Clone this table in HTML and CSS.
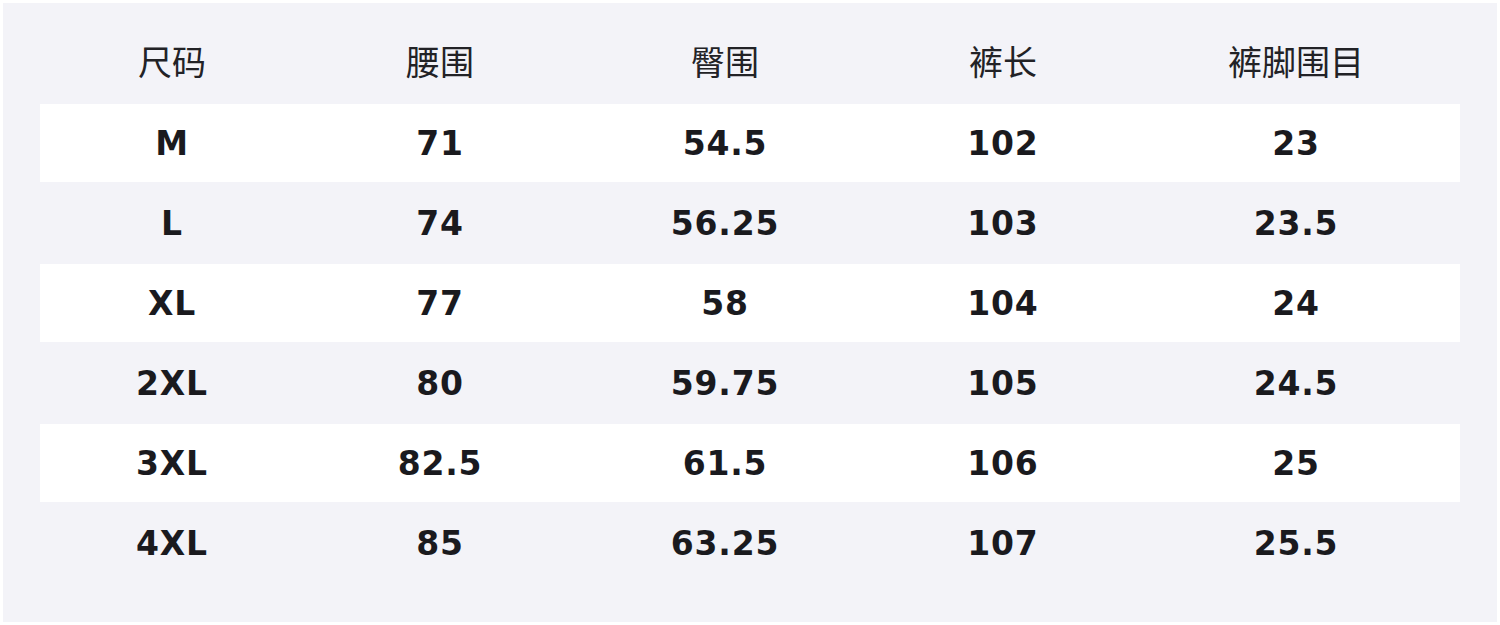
FILE: index.html
```html
<!DOCTYPE html>
<html lang="zh">
<head>
<meta charset="utf-8">
<link rel="stylesheet" href="styles.css">
</head>
<body>
<div class="panel">
  <div class="table">
    <div class="row head"><div>尺码</div><div>腰围</div><div>臀围</div><div>裤长</div><div>裤脚围目</div></div>
    <div class="row w"><div>M</div><div>71</div><div>54.5</div><div>102</div><div>23</div></div>
    <div class="row g"><div>L</div><div>74</div><div>56.25</div><div>103</div><div>23.5</div></div>
    <div class="row w"><div>XL</div><div>77</div><div>58</div><div>104</div><div>24</div></div>
    <div class="row g"><div>2XL</div><div>80</div><div>59.75</div><div>105</div><div>24.5</div></div>
    <div class="row w"><div>3XL</div><div>82.5</div><div>61.5</div><div>106</div><div>25</div></div>
    <div class="row g"><div>4XL</div><div>85</div><div>63.25</div><div>107</div><div>25.5</div></div>
  </div>
</div>
</body>
</html>
```

FILE: styles.css
```css
html, body {
  margin: 0;
  padding: 0;
  background: #ffffff;
}
.panel {
  margin: 3px;
  width: 1494px;
  height: 619px;
  box-sizing: border-box;
  background: #f3f3f8;
  padding: 0 37px;
}
.table {
  display: flex;
  flex-direction: column;
}
.row {
  display: grid;
  grid-template-columns: 264px 272px 298px 258px 328px;
  align-items: center;
  justify-items: center;
  font-family: "DejaVu Sans", "Noto Sans CJK SC", sans-serif;
  font-weight: bold;
  font-size: 33px;
  letter-spacing: 0.8px;
  color: #1a1a1e;
}
.row.head {
  height: 101px;
  font-family: "Noto Sans CJK SC", sans-serif;
  font-weight: normal;
  font-size: 34px;
  letter-spacing: 0;
  color: #222226;
  padding-top: 14px;
  box-sizing: border-box;
}
.row.w {
  height: 78px;
  background: #ffffff;
}
.row.g {
  height: 82px;
}
```
